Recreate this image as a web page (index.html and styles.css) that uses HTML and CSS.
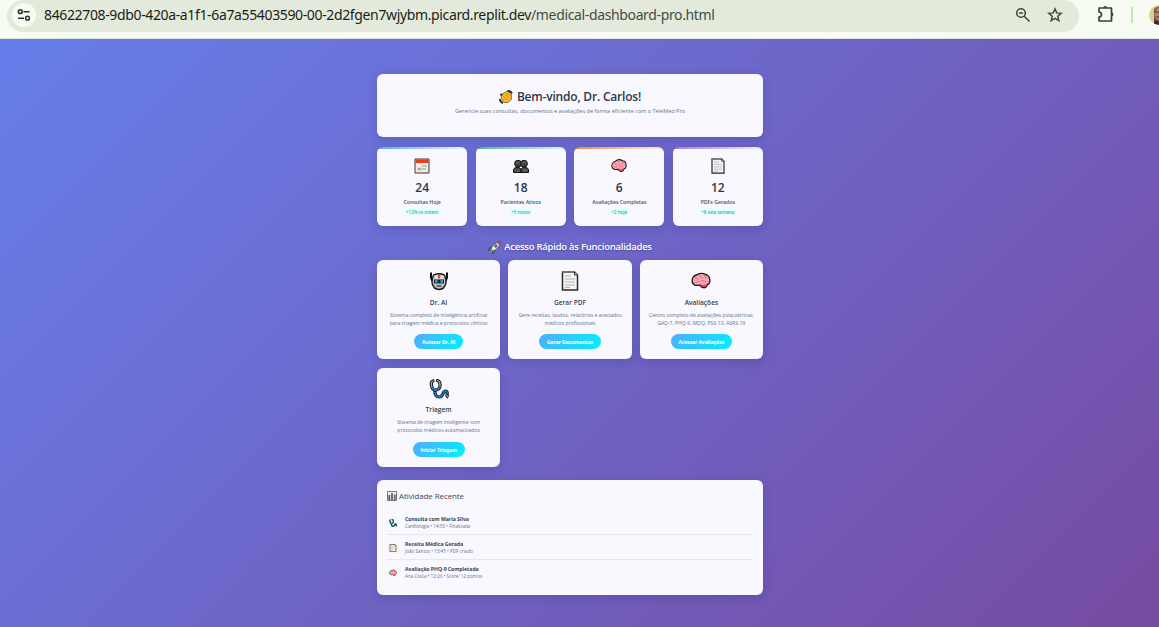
FILE: index.html
```html
<!DOCTYPE html>
<html lang="pt-BR">
<head>
<meta charset="utf-8">
<title>TeleMed Pro</title>
<link rel="stylesheet" href="styles.css">
</head>
<body>
<svg class="defs" aria-hidden="true">
  <symbol id="doc" viewBox="0 0 18 20">
    <path d="M1.500 1h12l3 3v15h-15z" fill="#f4f4f4" stroke="#292929" stroke-width="1.500"/>
    <path d="M1 1h12.500" stroke="#777" stroke-width="1.800"/>
    <path d="M4 5h6M4 8h10M4 11h10M4 14h10M4 16.500h5" stroke="#b5b5b5" stroke-width="1"/>
    <path d="M13.500 1v3h3" fill="#ddd" stroke="#292929"/>
  </symbol>
  <symbol id="brain" viewBox="0 0 20 18">
    <path d="M1.200 10C.5 6 3 3.500 5.500 3 8 .8 12 .8 14.500 2.500c2.500.5 4.300 3 4.300 5.500.5 2.500-.8 4.200-2.500 4.500-.3 2.500-2.500 3.800-4.500 3-1.500-.3-2.500-1.500-3-2.500C5 14.200 1.800 13 1.200 10z" fill="#f8a3b1" stroke="#1d1618" stroke-width="1.300"/>
    <path d="M10 12.500c2 .8 4 .5 6-.3-.3 2-2 3.200-4 2.700-1.200-.4-1.800-1.200-2-2.400z" fill="#e83a50"/>
    <path d="M4 6c2-.5 3 .5 3 2M9 3c-.5 2 1 3 2.500 2.500M13 4c2 0 2.500 2 1.500 3M3.500 10.500c2 .5 3-.5 4-1M10 9c2-1 3 .5 5 .5" fill="none" stroke="#e0697d" stroke-width="1"/>
  </symbol>
  <symbol id="steth" viewBox="0 0 20 20">
    <g fill="none" stroke-linecap="round">
      <path d="M6 11.500q-.5 6.500 4.500 6.500c4 0 3-6 6-6q2 0 1.700 4" stroke="#111" stroke-width="3.200"/>
      <path d="M6 11.500q-.5 6.500 4.500 6.500c4 0 3-6 6-6q2 0 1.700 4" stroke="#1474c4" stroke-width="1.800"/>
      <path d="M4 2C1 3 2.500 9 4.500 10.500q2 1.500 5-.5C12 8 11.500 2.500 8.500 1.500" stroke="#111" stroke-width="3.200"/>
      <path d="M4 2C1 3 2.500 9 4.500 10.500q2 1.500 5-.5C12 8 11.500 2.500 8.500 1.500" stroke="#aaa" stroke-width="1.300"/>
      <path d="M3.300 7.500q.7 3.500 3.200 3.500 3.500-.3 4.300-3" stroke="#1474c4" stroke-width="1.400"/>
    </g>
    <path d="M16.700 17l1.300-2.500 1.500 2.500-1.200 2.300z" fill="#999" stroke="#333"/>
  </symbol>
</svg>

<header class="browser">
  <div class="omnibox">
    <span class="site"><svg width="24" height="24" viewBox="0 0 24 24" fill="none" stroke="#2b302a" stroke-width="1.500"><circle cx="8.300" cy="8.700" r="1.900"/><path d="M11.500 8.700H17.500M6 15.200h6"/><circle cx="15.500" cy="15.200" r="1.900"/></svg></span>
    <span class="url">84622708-9db0-420a-a1f1-6a7a55403590-00-2d2fgen7wjybm.picard.replit.dev<span class="path">/medical-dashboard-pro.html</span></span>
    <svg class="zoom" width="16" height="16" viewBox="0 0 16 16" fill="none" stroke="#434940" stroke-width="1.600"><circle cx="6" cy="6" r="4.300"/><path d="M9.200 9.200L14.500 14.500M4 6h4"/></svg>
    <svg class="star" width="16" height="16" viewBox="0 0 16 16" fill="none" stroke="#434940" stroke-width="1.500"><path d="M8 1.900l1.700 4 4.500.4-3.400 3 1 4.400L8 11.400l-3.800 2.300 1-4.400-3.400-3 4.500-.4z"/></svg>
  </div>
  <svg class="ext" width="18" height="18" viewBox="0 0 18 18" fill="none" stroke="#35462f" stroke-width="1.700" stroke-linejoin="round"><path d="M2 3h12.500v13H2v-4c1.400 0 2.500-1 2.500-2.500S3.400 7 2 7z"/><path d="M6.300 3a1.900 1.900 0 013.800 0zM14.500 7.600a1.900 1.900 0 010 3.800z" fill="#35462f" stroke="none"/></svg>
  <span class="divider"></span>
  <svg class="avatar" width="20" height="20" viewBox="0 0 20 20"><defs><clipPath id="face"><circle cx="10" cy="10" r="10"/></clipPath></defs><g clip-path="url(#face)"><path d="M0 0h20v20H0z" fill="#d9d295"/><path d="M5 4q5-5 12 0v13H5z" fill="#79503f"/><ellipse cx="10" cy="9" rx="4.500" ry="6.500" fill="#bf806a"/><path d="M5 7h10M7 12h5" stroke="#533" stroke-width="1.200"/><path d="M4 20l2-5 4 2 5-2v5z" fill="#44272b"/></g></svg>
</header>

<main class="page">
<div class="container">
  <section class="card welcome">
    <h1><svg width="14" height="14" viewBox="0 0 14 14"><path d="M2 8l1-4L5.500 2.500l3.500-1.500 3.500 3.500v5l-3.500 3H5z" fill="#f7b62e" stroke="#51420f" stroke-width=".6"/><path d="M4 6l4 4M6 4l4 4M8 3l3 3" stroke="#bd7c13" stroke-width=".6"/><path d="M8.500 1q3-.5 4.500 2.500M1 9q0 3 3 4M1.500 5.500L3 4" fill="none" stroke="#153c42" stroke-width="2"/></svg><span>Bem-vindo, Dr. Carlos!</span></h1>
    <p><span class="t">Gerencie suas consultas, documentos e avaliações de forma eficiente com o TeleMed Pro</span></p>
  </section>

  <section class="stats">
    <article class="card stat blue"><svg class="ico" viewBox="0 0 16 16"><path d="M1 1h14v14H1z" fill="#eee" stroke="#48332e"/><path d="M1.500 1.500h13V5h-13z" fill="#e83c17"/><path d="M8 7h5v2H8zM6 10h6v2H6z" fill="#c4c4c4"/><path d="M3.500 9.500l3 3m0-3l-3 3" stroke="#e5846f"/></svg><b>24</b><span class="label">Consultas Hoje</span><span class="chip"><span class="t">+12% vs ontem</span></span></article>
    <article class="card stat green"><svg class="ico" viewBox="0 0 16 16"><g fill="#424242" stroke="#171717"><path d="M.5 14.500V12q0-2 2.500-2.500h3q2 .5 2 2.500v2.500zM8 14.500V12q0-2 2-2.500h3q2.500.5 2.500 2.500v2.500z"/><circle cx="5" cy="5.700" r="3.400"/><circle cx="11" cy="5.700" r="3.400"/></g><path d="M3 5q2-2 3.500 0M9.500 5q2-2 3.500 0" stroke="#777" fill="none"/><path d="M1.500 12.500h5.500M9 12.500h5.500" stroke="#595959" stroke-width="2.500"/></svg><b>18</b><span class="label">Pacientes Ativos</span><span class="chip"><span class="t">+5 novos</span></span></article>
    <article class="card stat orange"><svg class="ico"><use href="#brain"/></svg><b>6</b><span class="label">Avaliações Completas</span><span class="chip"><span class="t">+2 hoje</span></span></article>
    <article class="card stat purple"><svg class="ico"><use href="#doc"/></svg><b>12</b><span class="label">PDFs Gerados</span><span class="chip"><span class="t">+8 esta semana</span></span></article>
  </section>

  <h2 class="quick"><svg width="13" height="13" viewBox="0 0 13 13"><path d="M4 6L1 7l-.5 2.500 3-.5zM7 9l-.5 3L4 12.500l.5-3z" fill="#2590d0" stroke="#153654" stroke-width=".5"/><path d="M3 8Q5 1.500 12.300.7 12 7.500 5 10z" fill="#e8edf0" stroke="#22303a" stroke-width=".7"/><path d="M8.500 1.500l3.800-.8-.8 3.800z" fill="#e43c2d"/><circle cx="7.800" cy="5" r="1.400" fill="#2796cd" stroke="#233" stroke-width=".5"/><path d="M3 8l2 2-3.500 2.300z" fill="#f56a24"/></svg><span>Acesso Rápido às Funcionalidades</span></h2>

  <section class="features">
    <article class="card feature"><svg class="fi" viewBox="0 0 20 20"><path d="M2 1.500v5l1.500 4M18 1.500v5l-1.500 4" fill="none" stroke="#111" stroke-width="2"/><path d="M4.500 4Q10 1.500 15.500 4q1.500 3 1.500 8-1.500 6.500-7 6.500T3 12q0-5 1.500-8z" fill="#c2c2c2" stroke="#171717" stroke-width="1.300"/><path d="M6 4.500h8V8H6z" fill="#e2e2e2"/><path d="M9 3.500h2.200v4H9z" fill="#e94c23"/><path d="M5 8.500h10v4H5z" fill="#19272e"/><path d="M6 9h2.500v2.800H6zM11.500 9H14v2.800h-2.500z" fill="#23a7de"/><path d="M7.500 15h5" stroke="#333" stroke-width="1.300"/></svg><h3>Dr. AI</h3><p><span class="t">Sistema completo de inteligência artificial</span><br><span class="t">para triagem médica e protocolos clínicos</span></p><a class="btn b1">Acessar Dr. AI</a></article>
    <article class="card feature"><svg class="fi"><use href="#doc"/></svg><h3>Gerar PDF</h3><p><span class="t">Gere receitas, laudos, relatórios e atestados</span><br><span class="t">médicos profissionais</span></p><a class="btn b2">Gerar Documentos</a></article>
    <article class="card feature"><svg class="fi"><use href="#brain"/></svg><h3>Avaliações</h3><p><span class="t">Centro completo de avaliações psiquiátricas:</span><br><span class="t">GAD-7, PHQ-9, MDQ, PSS-10, ASRS-18</span></p><a class="btn b3">Acessar Avaliações</a></article>
    <article class="card feature last"><svg class="fi"><use href="#steth"/></svg><h3>Triagem</h3><p><span class="t">Sistema de triagem inteligente com</span><br><span class="t">protocolos médicos automatizados</span></p><a class="btn b4">Iniciar Triagem</a></article>
  </section>

  <section class="card activity">
    <h2><svg width="10" height="10" viewBox="0 0 10 10"><path d="M.5.500h9v9h-9z" fill="#eef3f5" stroke="#777"/><path d="M1.300 4h2v5h-2z" fill="#258a55"/><path d="M4 2h2v7H4z" fill="#e34334"/><path d="M6.800 3.500h2V9h-2z" fill="#2b86cf"/></svg><span>Atividade Recente</span></h2>
    <div class="row"><span class="dot mint"><svg><use href="#steth"/></svg></span><div><strong>Consulta com Maria Silva</strong><small>Cardiologia • 14:30 • Finalizada</small></div></div>
    <div class="row"><span class="dot sand"><svg><use href="#doc"/></svg></span><div><strong>Receita Médica Gerada</strong><small>João Santos • 13:45 • PDF criado</small></div></div>
    <div class="row"><span class="dot leaf"><svg><use href="#brain"/></svg></span><div><strong>Avaliação PHQ-9 Completada</strong><small>Ana Costa • 12:20 • Score: 12 pontos</small></div></div>
  </section>
</div>
</main>
</body>
</html>
```
FILE: styles.css
```css
* { box-sizing: border-box; margin: 0; padding: 0; }
body { width: 1159px; height: 627px; overflow: hidden; font-family: "Open Sans", "Noto Sans", sans-serif; color: #2d3748; }
.defs { display: none; }
svg { flex: none; display: block; }
.browser { height: 39px; background: #f8fbf3; border-bottom: 1px solid #dce4d7; display: flex; align-items: flex-start; overflow: hidden; }
.omnibox { width: 1072px; height: 32px; margin-left: 7px; flex: none; background: #e3eadc; border-radius: 16px; display: flex; align-items: center; }
.site { width: 24px; height: 24px; margin: -2px 0 0 5px; border-radius: 50%; background: #f8fbf3; }
.url { margin: -2px 0 0 8px; width: 960px; font: 14px/20px "Noto Sans", sans-serif; letter-spacing: -.36px; color: #1b1e19; white-space: nowrap; }
.path { color: #464b43; }
.zoom { margin: -2px 0 0 11px; }
.star { margin: -2px 0 0 16px; }
.ext { margin: 5px 0 0 18px; }
.divider { width: 2px; height: 16px; margin: 7px 0 0 16px; background: #bdecae; flex: none; }
.avatar { margin: 5px 0 0 16px; }
.page { height: 588px; padding: 35px 0 0 377px; background: linear-gradient(135deg, #667eea 0%, #764ba2 100%); }
.container { width: 386px; }
.card { background: #f8f8fe; border-radius: 6px; box-shadow: 0 3px 10px rgba(31, 38, 100, .2); }
.t { display: inline-block; white-space: nowrap; }
.welcome { height: 63px; padding-top: 15px; text-align: center; }
.welcome h1 { display: flex; justify-content: center; align-items: center; gap: 4px; height: 16px; font-size: 12px; line-height: 16px; font-weight: 600; letter-spacing: -.2px; }
.welcome p { font-size: 5.560px; line-height: 8px; margin-top: 2px; color: #66728a; }
.stats { display: grid; grid-template-columns: repeat(4, 1fr); gap: 8.200px; margin-top: 10px; }
.stat { height: 79px; padding-top: 11px; overflow: hidden; display: flex; flex-direction: column; align-items: center; background-repeat: no-repeat; background-size: 100% 2px; }
.blue { background-image: linear-gradient(90deg, #4facfe, #e9f3fe); }
.green { background-image: linear-gradient(90deg, #48bb78, #e3f4ec); }
.orange { background-image: linear-gradient(90deg, #ed8936, #fbefe7); }
.purple { background-image: linear-gradient(90deg, #9f7aea, #f1ecfd); }
.ico { width: 16px; height: 16px; }
.stat b { font-size: 12px; line-height: 16px; font-weight: 600; margin-top: 6px; }
.label { font-size: 5.250px; line-height: 8px; margin-top: 2px; color: #4a5568; font-weight: 600; letter-spacing: -.05px; }
.chip { height: 8px; padding: 0 3.500px; margin-top: 2px; border-radius: 4px; background: #e6fffa; color: #38b2ac; font-size: 4.600px; line-height: 8px; font-weight: 600; letter-spacing: -.1px; }
.quick { display: flex; align-items: center; justify-content: center; gap: 3px; height: 14px; margin-top: 14px; font-size: 9.500px; line-height: 14px; font-weight: 600; letter-spacing: -.25px; color: #fff; text-shadow: 0 1px 2px rgba(0, 0, 0, .3); }
.features { display: grid; grid-template-columns: repeat(3, 1fr); gap: 9px 8.200px; margin-top: 6px; }
.feature { height: 99px; padding-top: 11px; display: flex; flex-direction: column; align-items: center; text-align: center; }
.last { padding-top: 11px; }
.last h3 { margin-top: 6px; }
.last .btn { margin-top: 8px; }
.fi { width: 20px; height: 20px; }
.feature h3 { font-size: 6.600px; line-height: 10px; font-weight: 600; color: #374151; }
.feature:not(.last) h3 { margin-top: 7px; }
.feature p { font-size: 5.050px; line-height: 8px; margin-top: 3px; color: #66728a; }
.btn { height: 15px; line-height: 16px; margin-top: 7px; border-radius: 8px; background: linear-gradient(135deg, #4facfe, #00f2fe); color: #fff; font-size: 5.050px; font-weight: 700; letter-spacing: -.1px; }
.b1 { width: 49px; }
.b2 { width: 62px; }
.b3 { width: 61px; }
.b4 { width: 52px; }
.activity { height: 115px; margin-top: 13px; padding: 10px; }
.activity h2 { display: flex; align-items: center; gap: 2px; height: 12px; font-size: 7.900px; line-height: 12px; font-weight: 500; letter-spacing: -.05px; color: #3c4658; margin-bottom: 8px; }
.row { display: flex; align-items: center; gap: 6px; height: 25px; padding-top: 1px; border-bottom: 1px solid #e2e8f0; }
.row:last-child { border: 0; }
.dot { width: 12px; height: 12px; border-radius: 50%; display: grid; place-items: center; }
.dot svg { width: 8px; height: 8px; }
.mint { background: #e6fffa; }
.sand { background: #fef3e2; }
.leaf { background: #f0fff4; }
.row strong, .row small { display: block; white-space: nowrap; }
.row strong { font-size: 5.200px; line-height: 7px; font-weight: 700; letter-spacing: -.05px; color: #3a4454; }
.row small { font-size: 4.600px; line-height: 7px; color: #66728a; }
```
